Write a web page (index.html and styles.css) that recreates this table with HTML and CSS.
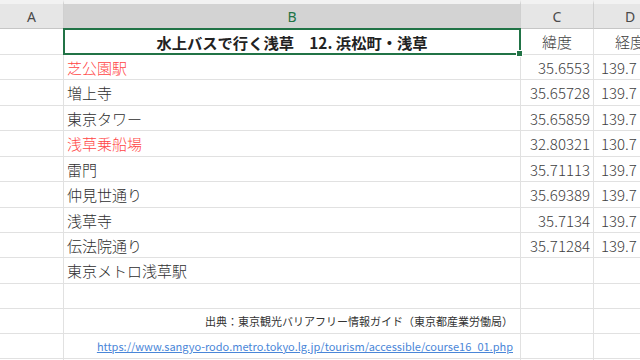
FILE: index.html
```html
<!DOCTYPE html>
<html lang="ja">
<head>
<meta charset="utf-8">
<title>水上バスで行く浅草</title>
<link rel="stylesheet" href="styles.css">
</head>
<body>
<div class="sheet">
  <div class="hd">A</div><div class="hd sel">B</div><div class="hd">C</div><div class="hd">D</div>

  <div class="c"></div><div class="c title">水上バスで行く浅草　12. 浜松町・浅草</div><div class="c ctr">緯度</div><div class="c ctr">経度</div>

  <div class="c"></div><div class="c red">芝公園駅</div><div class="c num">35.6553</div><div class="c lng">139.7</div>
  <div class="c"></div><div class="c">増上寺</div><div class="c num">35.65728</div><div class="c lng">139.7</div>
  <div class="c"></div><div class="c">東京タワー</div><div class="c num">35.65859</div><div class="c lng">139.7</div>
  <div class="c"></div><div class="c red">浅草乗船場</div><div class="c num">32.80321</div><div class="c lng">130.7</div>
  <div class="c"></div><div class="c">雷門</div><div class="c num">35.71113</div><div class="c lng">139.7</div>
  <div class="c"></div><div class="c">仲見世通り</div><div class="c num">35.69389</div><div class="c lng">139.7</div>
  <div class="c"></div><div class="c">浅草寺</div><div class="c num">35.7134</div><div class="c lng">139.7</div>
  <div class="c"></div><div class="c">伝法院通り</div><div class="c num">35.71284</div><div class="c lng">139.7</div>
  <div class="c"></div><div class="c">東京メトロ浅草駅</div><div class="c"></div><div class="c"></div>
  <div class="c"></div><div class="c"></div><div class="c"></div><div class="c"></div>
  <div class="c"></div><div class="c src">出典：東京観光バリアフリー情報ガイド（東京都産業労働局）</div><div class="c"></div><div class="c"></div>
  <div class="c"></div><div class="c src"><a class="link" href="#">https://www.sangyo-rodo.metro.tokyo.lg.jp/tourism/accessible/course16_01.php</a></div><div class="c"></div><div class="c"></div>
  <div class="c last"></div><div class="c last"></div><div class="c last"></div><div class="c last"></div>
</div>
</body>
</html>
```

FILE: styles.css
```css
html, body {
  margin: 0;
  padding: 0;
  background: #ffffff;
  overflow: hidden;
}

body {
  width: 640px;
  height: 360px;
  font-family: "Noto Sans CJK JP", "Noto Sans", sans-serif;
  color: #2e2e2e;
}

.sheet {
  display: grid;
  grid-template-columns: 64px 457px 73px 73px;
  grid-template-rows: 29px 26px 25px 26px 25px 26px 25px 26px 25px 25px 26px 25px 25px 25px 1px;
  width: 640px;
  height: 360px;
  overflow: hidden;
}

.hd {
  box-sizing: border-box;
  background: #e6e6e6;
  border-top: 4px solid #f2f2f2;
  border-right: 1px solid #d0d0d0;
  border-bottom: 1px solid #c6c6c6;
  display: flex;
  align-items: center;
  justify-content: center;
  font-family: "Noto Sans", sans-serif;
  font-size: 14px;
  color: #4a4a4a;
}

.hd.sel {
  background: #d3d3d3;
  color: #217346;
  border-bottom: 1px solid #217346;
}

.c {
  box-sizing: border-box;
  border-right: 1px solid #e1e1e1;
  border-bottom: 1px solid #e1e1e1;
  display: flex;
  align-items: center;
  padding: 0 3px;
  font-size: 15px;
  font-weight: 300;
  white-space: nowrap;
  overflow: hidden;
  min-width: 0;
}

.last {
  border-bottom: 0;
}

.title {
  position: relative;
  overflow: visible;
  justify-content: center;
  font-weight: bold;
  font-size: 15.3px;
  color: #222222;
}

.title::after {
  content: "";
  position: absolute;
  left: -1px;
  top: -1px;
  right: -1px;
  bottom: -1px;
  border: 2px solid #217346;
  pointer-events: none;
}

.title::before {
  content: "";
  position: absolute;
  right: -3px;
  bottom: -3px;
  width: 5px;
  height: 5px;
  background: #217346;
  border: 1px solid #ffffff;
  z-index: 2;
}

.red {
  color: #ff4545;
}

.ctr {
  justify-content: center;
  color: #404040;
}

.num {
  justify-content: flex-end;
  padding-right: 3px;
  color: #404040;
}

.lng {
  padding-left: 7px;
  color: #404040;
}

.src {
  justify-content: flex-end;
  font-size: 11px;
  font-weight: 400;
  color: #333333;
  padding-right: 7px;
}

.link {
  color: #4a86d8;
  text-decoration: underline;
  font-family: "Noto Sans CJK JP", sans-serif;
  font-weight: 400;
}
```
